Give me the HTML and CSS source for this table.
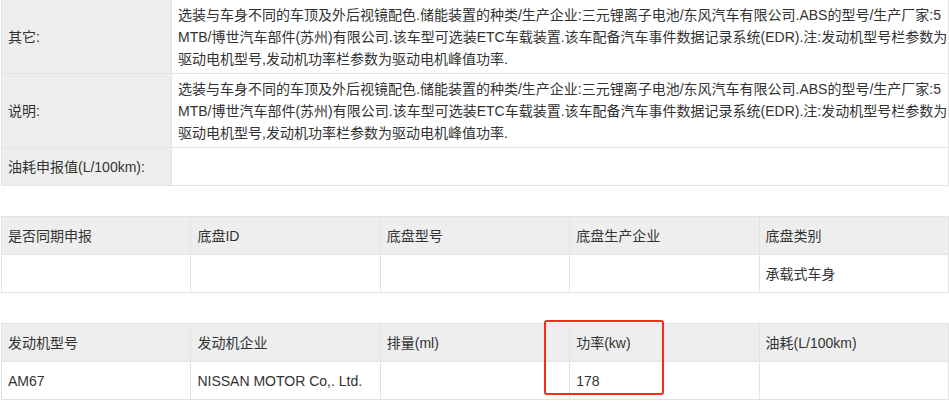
FILE: index.html
```html
<!DOCTYPE html>
<html>
<head>
<meta charset="utf-8">
<title>车辆参数</title>
<link rel="stylesheet" href="styles.css">
</head>
<body>
<div class="page">
  <table class="info">
    <colgroup><col class="c-label"><col></colgroup>
    <tr>
      <th>其它:</th>
      <td>选装与车身不同的车顶及外后视镜配色.储能装置的种类/生产企业:三元锂离子电池/东风汽车有限公司.ABS的型号/生产厂家:5<br>MTB/博世汽车部件(苏州)有限公司.该车型可选装ETC车载装置.该车配备汽车事件数据记录系统(EDR).注:发动机型号栏参数为<br>驱动电机型号,发动机功率栏参数为驱动电机峰值功率.</td>
    </tr>
    <tr>
      <th>说明:</th>
      <td>选装与车身不同的车顶及外后视镜配色.储能装置的种类/生产企业:三元锂离子电池/东风汽车有限公司.ABS的型号/生产厂家:5<br>MTB/博世汽车部件(苏州)有限公司.该车型可选装ETC车载装置.该车配备汽车事件数据记录系统(EDR).注:发动机型号栏参数为<br>驱动电机型号,发动机功率栏参数为驱动电机峰值功率.</td>
    </tr>
    <tr>
      <th>油耗申报值(L/100km):</th>
      <td></td>
    </tr>
  </table>

  <table class="grid">
    <tr class="head">
      <td>是否同期申报</td>
      <td>底盘ID</td>
      <td>底盘型号</td>
      <td>底盘生产企业</td>
      <td>底盘类别</td>
    </tr>
    <tr>
      <td></td>
      <td></td>
      <td></td>
      <td></td>
      <td>承载式车身</td>
    </tr>
  </table>

  <div class="engine">
    <table class="grid">
      <tr class="head">
        <td>发动机型号</td>
        <td>发动机企业</td>
        <td>排量(ml)</td>
        <td>功率(kw)</td>
        <td>油耗(L/100km)</td>
      </tr>
      <tr>
        <td>AM67</td>
        <td>NISSAN MOTOR Co,. Ltd.</td>
        <td></td>
        <td>178</td>
        <td></td>
      </tr>
    </table>
    <div class="mark"></div>
  </div>
</div>
</body>
</html>
```

FILE: styles.css
```css
*{margin:0;padding:0;box-sizing:border-box;}
body{
	font:14px "Liberation Sans","Noto Sans CJK SC",sans-serif;
	color:#333;
	background:#fff;
}
.page{
	width:948px;
	margin:-1px 0 0 1px;
}
table{
	width:948px;
	border-collapse:collapse;
	table-layout:fixed;
}
th,td{
	border:1px solid #e3e3e3;
	padding:4px 6px 3px;
	line-height:22px;
	height:38px;
	text-align:left;
	font-weight:normal;
	vertical-align:middle;
	white-space:nowrap;
}
.info .c-label{width:170px;}
.info th{background:#eee;}
.grid{margin-top:30px;}
.grid td{width:20%;}
.grid .head td{background:#eee;}

.engine{
	position:relative;
	margin-top:30px;
}
.engine .grid{margin-top:0;}
.mark{
	position:absolute;
	left:543px;
	top:-3px;
	width:120px;
	height:75px;
	border:2px solid #fb2a1c;
	border-radius:3px;
}
```
